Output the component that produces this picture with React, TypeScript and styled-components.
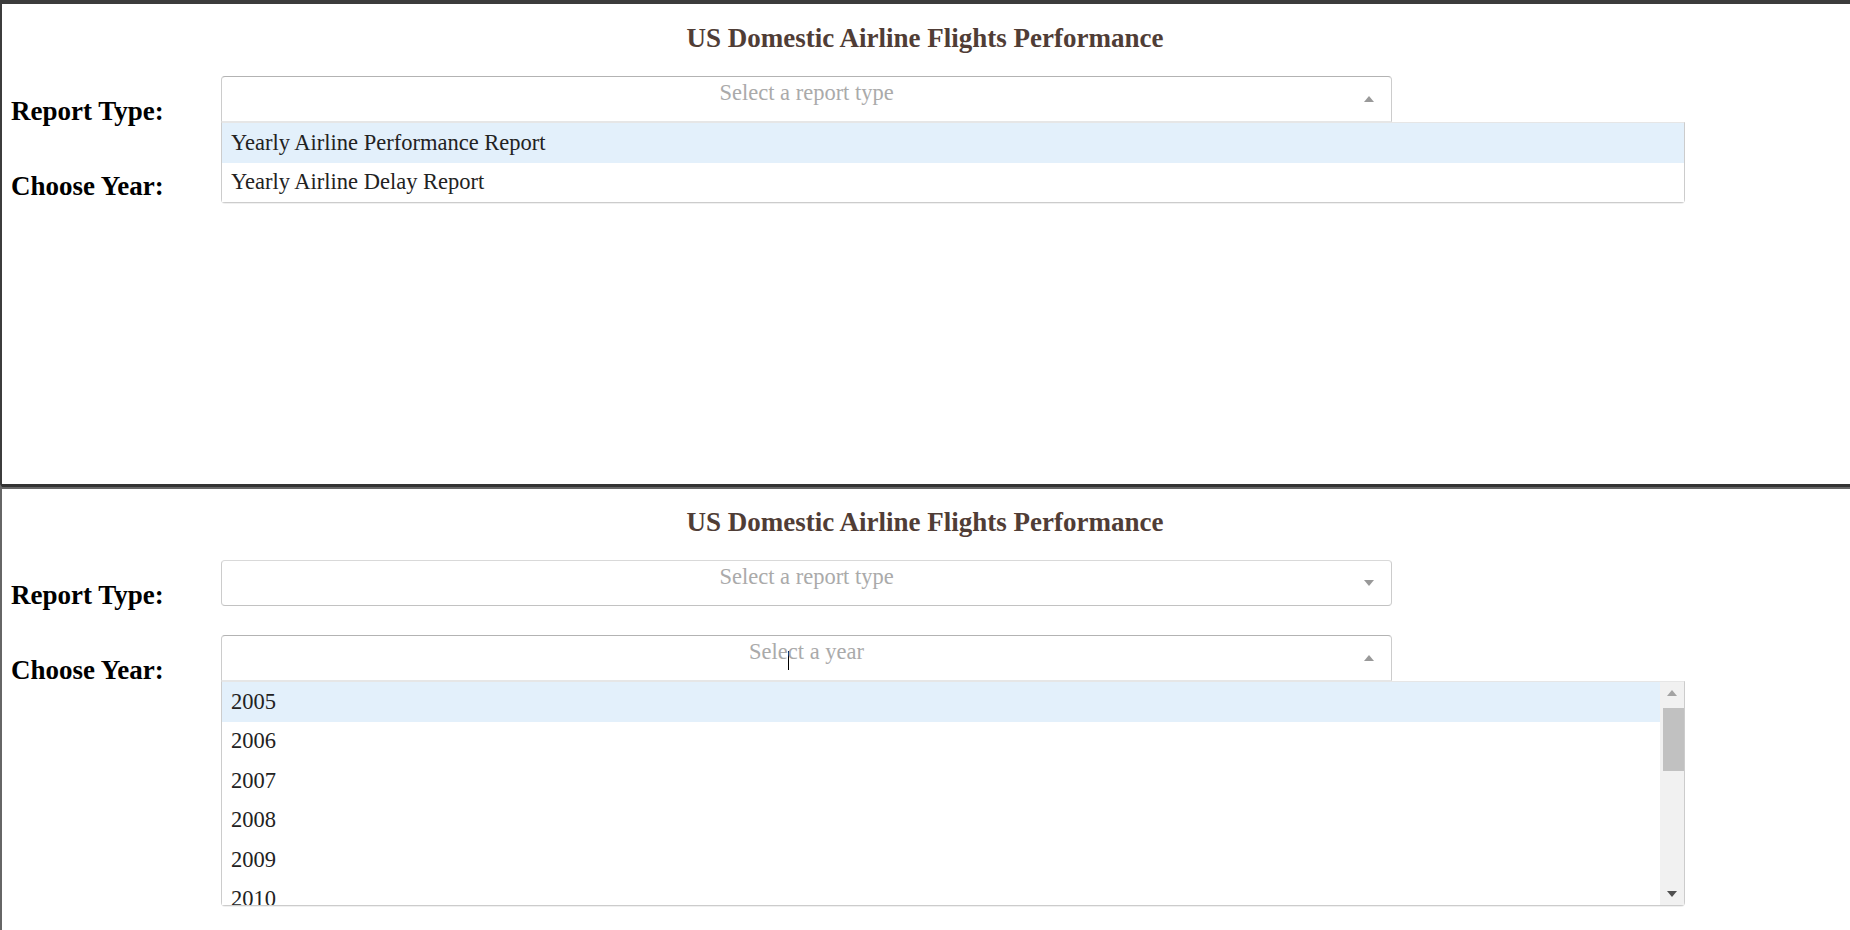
import * as React from 'react';
import styled, { createGlobalStyle } from 'styled-components';

const GlobalStyle = createGlobalStyle`
  html, body {
    margin: 0;
    padding: 0;
    background: #fff;
    overflow: hidden;
  }
  body {
    font-family: "Liberation Serif", "Times New Roman", serif;
  }
`;

const Page = styled.div`
  width: 1850px;
  height: 930px;
  display: flex;
  flex-direction: column;
  overflow: hidden;
  background: #fff;
`;

const Panel = styled.section<{ $variant: 'top' | 'bottom' }>`
  box-sizing: border-box;
  position: relative;
  display: flex;
  flex-direction: column;
  padding: 0 0 0 9px;
  ${p =>
    p.$variant === 'top'
      ? `
    height: 484px;
    flex: none;
    padding-top: 1px;
    border-top: 4px solid #3c3c3c;
    border-left: 2px solid #3c3c3c;
  `
      : `
    flex: 1;
    border-top: 3px solid #333;
    border-left: 2px solid #666;
    padding-top: 2px;
    box-shadow: inset 0 2px 0 #666;
  `}
`;

const Title = styled.h1`
  margin: 18px 0 23px -11px;
  font-size: 27px;
  line-height: 30px;
  font-weight: bold;
  text-align: center;
  color: #503d36;
`;

const Form = styled.div`
  display: flex;
  flex-direction: column;
  gap: 25px;
`;

const Row = styled.div<{ $raised?: boolean }>`
  display: flex;
  align-items: flex-start;
  position: relative;
  z-index: ${p => (p.$raised ? 2 : 1)};
`;

const Label = styled.h2`
  width: 210px;
  flex: none;
  margin: 20px 0 0;
  font-size: 27px;
  line-height: 30px;
  font-weight: bold;
  color: #000;
`;

const Field = styled.div`
  position: relative;
  width: 1464px;
  font-size: 22.5px;
`;

const Control = styled.div<{ $open?: boolean }>`
  box-sizing: border-box;
  width: 80%;
  height: 46px;
  display: grid;
  grid-template-columns: 1fr;
  background: #fff;
  border: 1px solid #ccc;
  border-color: ${p => (p.$open ? '#b3b3b3 #ccc #e6e6e6' : '#d9d9d9 #ccc #c2c2c2')};
  border-radius: ${p => (p.$open ? '4px 4px 0 0' : '4px')};
`;

const Placeholder = styled.div`
  grid-area: 1 / 1;
  line-height: 32px;
  text-align: center;
  color: #aaa;
  white-space: nowrap;
`;

const TextCursor = styled.span`
  display: inline-block;
  width: 0;
  height: 19px;
  border-left: 1px solid #000;
  margin-right: -1px;
  vertical-align: -11px;
`;

const ArrowZone = styled.div`
  grid-area: 1 / 1;
  justify-self: end;
  align-self: center;
  width: 44px;
  display: flex;
  justify-content: center;
`;

const Arrow = styled.span<{ $up?: boolean }>`
  width: 0;
  height: 0;
  border-style: solid;
  border-color: transparent;
  ${p =>
    p.$up
      ? 'border-width: 0 5.5px 6px; border-bottom-color: #999;'
      : 'border-width: 6px 5.5px 0; border-top-color: #999;'}
`;

const Menu = styled.div`
  position: absolute;
  top: 100%;
  left: 0;
  width: 100%;
  box-sizing: border-box;
  display: flex;
  background: #fff;
  border: 1px solid #ccc;
  border-top-color: #e6e6e6;
  border-radius: 0 0 4px 4px;
  box-shadow: 0 1px 0 rgba(0, 0, 0, 0.06);
  z-index: 5;
`;

const List = styled.div<{ $max?: number }>`
  flex: 1;
  overflow: hidden;
  ${p => (p.$max ? `height: ${p.$max}px;` : '')}
`;

const Option = styled.div<{ $focused?: boolean }>`
  box-sizing: border-box;
  height: 39.5px;
  padding: 0 9px;
  display: flex;
  align-items: center;
  color: #222;
  background: ${p => (p.$focused ? '#e3f0fb' : '#fff')};
  white-space: nowrap;
`;

const Scrollbar = styled.div`
  width: 24px;
  flex: none;
  display: flex;
  flex-direction: column;
  align-items: center;
  background: #f1f1f1;
`;

const ScrollButton = styled.div`
  height: 22px;
  width: 100%;
  display: flex;
  align-items: center;
  justify-content: center;
`;

const ScrollTriangle = styled.span<{ $down?: boolean }>`
  width: 0;
  height: 0;
  border-style: solid;
  border-color: transparent;
  ${p =>
    p.$down
      ? 'border-width: 6px 5.5px 0; border-top-color: #505050;'
      : 'border-width: 0 5.5px 6px; border-bottom-color: #a3a3a3;'}
`;

const ScrollTrack = styled.div`
  flex: 1;
  width: 100%;
  display: flex;
  justify-content: flex-end;
  padding-top: 4px;
`;

const Thumb = styled.div`
  width: 21px;
  height: 63px;
  background: #c1c1c1;
`;

const reportOptions = ['Yearly Airline Performance Report', 'Yearly Airline Delay Report'];
const years = Array.from({ length: 16 }, (_, i) => String(2005 + i));

const Header = () => <Title>US Domestic Airline Flights Performance</Title>;

const App = () => {
  return (
    <>
      <GlobalStyle />
      <Page>
        <Panel $variant="top">
          <Header />
          <Form>
            <Row $raised>
              <Label>Report Type:</Label>
              <Field>
                <Control $open>
                  <Placeholder>Select a report type</Placeholder>
                  <ArrowZone>
                    <Arrow $up />
                  </ArrowZone>
                </Control>
                <Menu>
                  <List>
                    {reportOptions.map((o, i) => (
                      <Option key={o} $focused={i === 0}>
                        {o}
                      </Option>
                    ))}
                  </List>
                </Menu>
              </Field>
            </Row>
            <Row>
              <Label>Choose Year:</Label>
              <Field>
                <Control>
                  <Placeholder>Select a year</Placeholder>
                  <ArrowZone>
                    <Arrow />
                  </ArrowZone>
                </Control>
              </Field>
            </Row>
          </Form>
        </Panel>

        <Panel $variant="bottom">
          <Header />
          <Form>
            <Row>
              <Label>Report Type:</Label>
              <Field>
                <Control>
                  <Placeholder>Select a report type</Placeholder>
                  <ArrowZone>
                    <Arrow />
                  </ArrowZone>
                </Control>
              </Field>
            </Row>
            <Row $raised>
              <Label>Choose Year:</Label>
              <Field>
                <Control $open>
                  <Placeholder>
                    Sele<TextCursor />ct a year
                  </Placeholder>
                  <ArrowZone>
                    <Arrow $up />
                  </ArrowZone>
                </Control>
                <Menu>
                  <List $max={223}>
                    {years.map((y, i) => (
                      <Option key={y} $focused={i === 0}>
                        {y}
                      </Option>
                    ))}
                  </List>
                  <Scrollbar>
                    <ScrollButton>
                      <ScrollTriangle />
                    </ScrollButton>
                    <ScrollTrack>
                      <Thumb />
                    </ScrollTrack>
                    <ScrollButton>
                      <ScrollTriangle $down />
                    </ScrollButton>
                  </Scrollbar>
                </Menu>
              </Field>
            </Row>
          </Form>
        </Panel>
      </Page>
    </>
  );
};

export default App;
